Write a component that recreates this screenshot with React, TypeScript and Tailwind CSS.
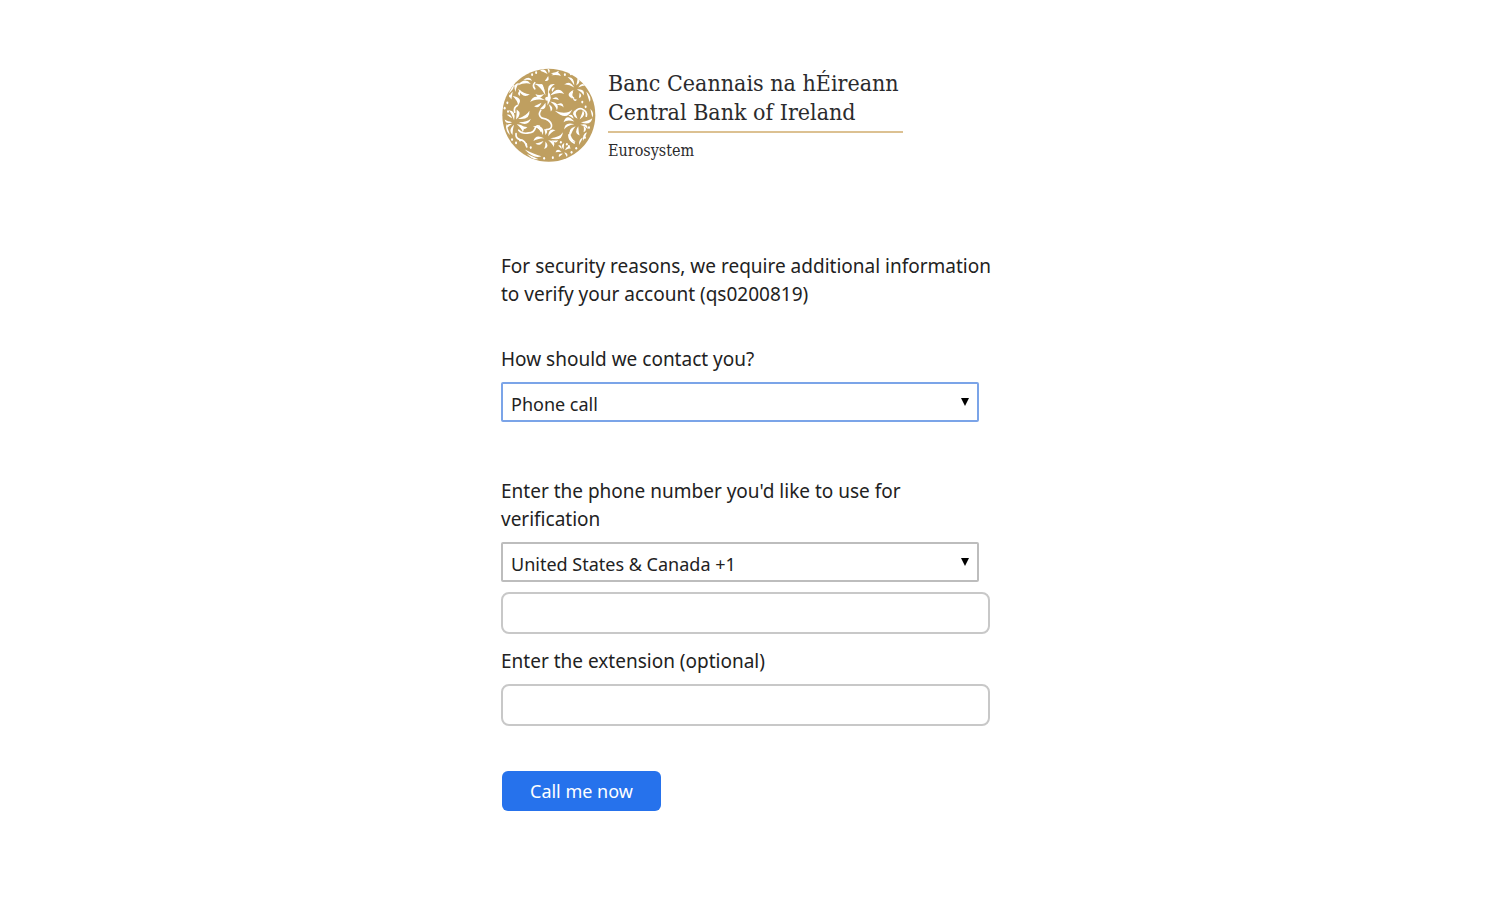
import type { SelectHTMLAttributes } from "react";
import { clsx } from "clsx";

// Feathers cut out of the gold disc: start x, start y, end x, end y, bend, thickness
const feathers = [
  // centre
  [156, 132, 158, 90, 8, 9], [158, 96, 178, 68, -14, 8], [170, 92, 178, 78, -6, 6],
  [150, 102, 118, 68, 16, 9], [146, 98, 120, 98, -14, 8], [144, 82, 130, 70, 8, 7],
  [164, 102, 206, 98, -20, 10], [170, 112, 190, 116, -8, 6],
  [148, 116, 104, 122, 18, 9], [138, 124, 116, 134, -8, 7], [150, 124, 134, 142, -10, 8],
  [164, 120, 184, 146, -14, 8], [160, 128, 166, 150, -8, 6],
  // upper left
  [68, 82, 104, 98, 16, 8], [66, 72, 106, 68, -16, 8], [60, 92, 72, 64, -12, 7],
  [76, 86, 74, 104, 8, 6], [84, 56, 110, 58, -10, 6], [52, 104, 68, 132, -16, 10],
  [52, 90, 48, 114, 6, 6],
  // left
  [56, 176, 40, 146, 12, 8], [62, 174, 64, 144, 10, 9], [68, 172, 102, 148, 16, 9],
  [70, 182, 106, 172, 14, 7], [64, 188, 82, 212, -14, 9], [56, 190, 52, 220, 10, 7],
  [50, 182, 28, 174, -8, 6], [50, 188, 34, 200, 8, 6],
  [74, 192, 96, 196, 9, 7], [50, 170, 34, 160, 5, 5],
  // lower centre
  [112, 194, 142, 220, -20, 9], [124, 196, 136, 212, -8, 6], [150, 220, 146, 202, 8, 7],
  [158, 224, 180, 206, -12, 8], [164, 230, 202, 212, 18, 8], [146, 230, 114, 238, 12, 8],
  [144, 238, 120, 246, -8, 6], [150, 240, 146, 262, -10, 7], [158, 236, 174, 256, -12, 8],
  [168, 236, 188, 236, 8, 6],
  // right
  [178, 148, 230, 144, 26, 10], [182, 130, 204, 138, -12, 7],
  [236, 180, 204, 182, 18, 10], [236, 188, 206, 204, 14, 7], [246, 172, 240, 144, -12, 8],
  [252, 174, 262, 146, 8, 7], [256, 182, 290, 170, 12, 8], [254, 190, 276, 202, -10, 7],
  [248, 194, 252, 222, 10, 8], [240, 194, 226, 222, 12, 8], [234, 172, 218, 162, 8, 6],
  [222, 210, 240, 240, 16, 8], [264, 192, 264, 212, -8, 6],
  // top right
  [236, 78, 206, 70, 12, 7], [236, 72, 216, 48, 10, 7], [242, 72, 246, 50, 8, 7],
  [248, 78, 268, 72, -8, 6], [244, 84, 264, 102, -12, 7], [234, 86, 230, 112, 16, 9],
  [252, 94, 250, 110, -6, 6], [232, 112, 244, 114, 6, 5],
  // top
  [156, 38, 134, 28, 8, 7], [160, 36, 156, 22, 5, 5], [166, 36, 190, 28, 9, 6],
  [168, 42, 196, 44, -12, 8], [158, 44, 148, 58, -8, 7],
  // bottom right
  [204, 264, 206, 244, -6, 6], [208, 266, 226, 260, -8, 6], [198, 270, 180, 272, 7, 6],
  [206, 272, 214, 286, -5, 5], [198, 262, 188, 252, 5, 5], [202, 276, 190, 286, 5, 5],
  // rim
  [88, 264, 138, 284, 10, 7], [94, 276, 128, 292, 5, 5], [262, 238, 274, 212, -5, 6],
  [250, 250, 262, 228, -4, 5], [272, 90, 282, 122, -6, 6], [40, 96, 56, 68, 4, 5],
  [284, 142, 290, 168, -5, 5], [32, 186, 44, 220, 5, 5],
];

const vines = [
  "M136 146q-10 16 4 24q24 4 28 20q2 14 -16 14",
  "M66 132q-12 6 -8 20M70 206q10 12 30 8q16 0 20 -16q4 -8 12 -4",
  "M236 158q8 -20 22 -16q18 8 14 22M234 110q-10 -6 -4 -18",
  "M118 82q-8 -10 0 -18",
  "M62 216q-2 14 12 18q16 2 20 22M220 220q0 16 16 24",
];

const specks = [
  [44, 104], [36, 124], [60, 74], [28, 140], [50, 234], [62, 244], [74, 236],
  [92, 248], [106, 258], [146, 290], [172, 288], [228, 272], [242, 260],
  [268, 228], [270, 136], [226, 38], [208, 40], [110, 40], [122, 34],
  [196, 242], [214, 248], [220, 254], [280, 198], [260, 122], [38, 150],
];

// A crescent whose curve tightens towards its tip
function featherPath([x1, y1, x2, y2, bend, thickness]: number[]) {
  const dx = x2 - x1;
  const dy = y2 - y1;
  const length = Math.hypot(dx, dy);
  const control = (b: number) =>
    `${x1 + dx * 0.65 - (dy / length) * b} ${y1 + dy * 0.65 + (dx / length) * b}`;
  return `M${x1} ${y1}Q${control(bend - thickness)} ${x2} ${y2}Q${control(bend + thickness)} ${x1} ${y1}Z`;
}

function Emblem() {
  return (
    <svg viewBox="20 20 281 281" className="size-[94px] shrink-0" aria-hidden="true">
      <circle cx="160" cy="161" r="139" fill="#bf9f60" />
      <g fill="#fff">
        {feathers.map((feather) => (
          <path key={feather.join()} d={featherPath(feather)} />
        ))}
        <circle cx="155" cy="112" r="6" />
        {specks.map(([x, y]) => (
          <ellipse key={`${x}-${y}`} cx={x} cy={y} rx="3" ry="4" />
        ))}
      </g>
      <g fill="none" stroke="#fff" strokeWidth="5" strokeLinecap="round">
        {vines.map((d) => (
          <path key={d} d={d} />
        ))}
      </g>
    </svg>
  );
}

function Logo() {
  return (
    <header className="flex gap-3 pl-px text-[#2b2b2d] font-['DejaVu_Serif_Condensed','DejaVu_Serif',serif]">
      <Emblem />
      <div className="pt-px whitespace-nowrap">
        <div className="border-b-2 border-[#dcc192] pr-1 pb-1 text-[23px] leading-[29px]">
          <p>Banc Ceannais na hÉireann</p>
          <p>Central Bank of Ireland</p>
        </div>
        <p className="pt-1 text-base leading-7">Eurosystem</p>
      </div>
    </header>
  );
}

interface PickerProps extends SelectHTMLAttributes<HTMLSelectElement> {
  active?: boolean;
}

function Picker({ active, children, ...rest }: PickerProps) {
  return (
    <div className="relative mr-[11px] text-lg">
      <select
        className={clsx(
          "block h-10 w-full appearance-none rounded-xs bg-white px-2 pt-1 outline-none",
          active ? "border-2 border-[#7ba4e8]" : "border-2 border-[#bdbdbd]",
        )}
        {...rest}
      >
        {children}
      </select>
      <svg
        viewBox="0 0 8 8"
        className="pointer-events-none absolute top-4 right-2.5 size-2"
        aria-hidden="true"
      >
        <path d="M0 0h8L4 8z" />
      </svg>
    </div>
  );
}

export default function App() {
  return (
    <main className="mx-auto max-w-[510px] pt-17 text-[19px] leading-7 text-[#222] font-['Noto_Sans',sans-serif]">
      <Logo />
      <form className="mt-[87px] mr-[21px]" onSubmit={(e) => e.preventDefault()}>
        <p className="-mr-[21px]">
          For security reasons, we require additional information to verify your account (qs0200819)
        </p>

        <label htmlFor="method" className="mt-[37px] mb-[9px] block">
          How should we contact you?
        </label>
        <Picker id="method" active>
          <option>Phone call</option>
          <option>Text message</option>
        </Picker>

        <label htmlFor="country" className="mt-[55px] mb-[9px] block">
          Enter the phone number you'd like to use for verification
        </label>
        <Picker id="country">
          <option>United States &amp; Canada +1</option>
          <option>Ireland +353</option>
        </Picker>
        <input
          type="tel"
          aria-label="Phone number"
          className="mt-2.5 block h-[42px] w-full rounded-lg border-2 border-[#c8c8c8] px-2 outline-none"
        />

        <label htmlFor="extension" className="mt-[13px] mb-[9px] block">
          Enter the extension (optional)
        </label>
        <input
          id="extension"
          type="text"
          className="block h-[42px] w-full rounded-lg border-2 border-[#c8c8c8] px-2 outline-none"
        />

        <button type="submit" className="mt-[45px] ml-px h-10 rounded-md bg-[#2672ec] px-7 text-lg text-white">
          Call me now
        </button>
      </form>
    </main>
  );
}
